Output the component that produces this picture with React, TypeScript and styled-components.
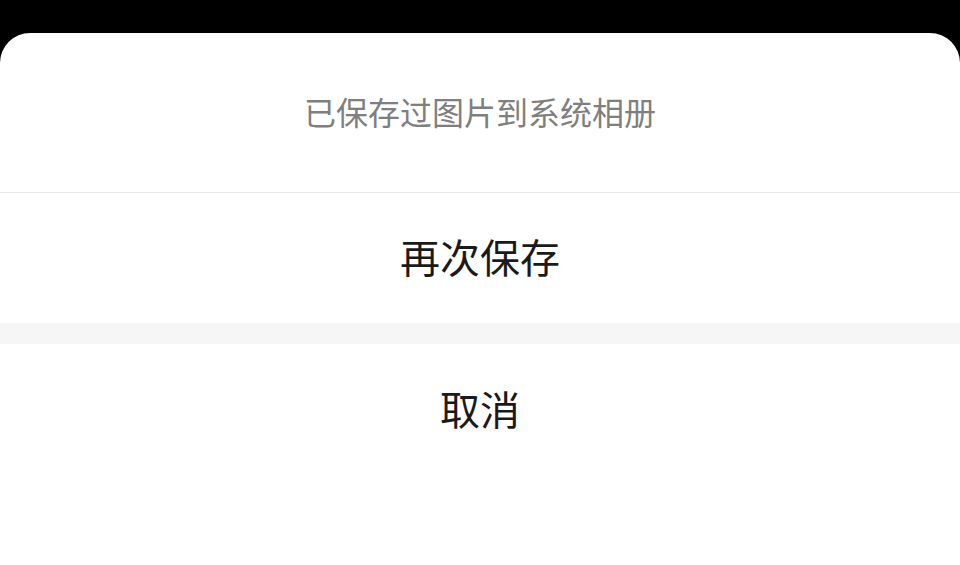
import React from 'react';
import styled, { createGlobalStyle } from 'styled-components';

const GlobalStyle = createGlobalStyle`
  html, body {
    margin: 0;
    padding: 0;
    background: #000;
    height: 100%;
  }
  #root {
    height: 100%;
  }
`;

const Screen = styled.div`
  height: 565px;
  display: flex;
  flex-direction: column;
  background: #000;
  padding-top: 33px;
  box-sizing: border-box;
  font-family: "Noto Sans CJK SC", "Noto Sans", sans-serif;
`;

const Sheet = styled.div`
  flex: 1;
  background: #fff;
  border-radius: 30px 30px 0 0;
  display: flex;
  flex-direction: column;
  overflow: hidden;
`;

const Title = styled.div`
  height: 160px;
  display: flex;
  align-items: center;
  justify-content: center;
  padding-bottom: 4px;
  box-sizing: border-box;
  font-size: 32px;
  color: #7f7f7f;
  border-bottom: 1px solid #e9e9e9;
`;

const Action = styled.div<{ $height: number }>`
  height: ${(p) => p.$height}px;
  display: flex;
  align-items: center;
  justify-content: center;
  padding-bottom: 5px;
  box-sizing: border-box;
  font-size: 40px;
  color: #1a1a1a;
`;

const Gap = styled.div`
  height: 21px;
  background: #f6f6f6;
`;

const App = () => {
  return (
    <>
      <GlobalStyle />
      <Screen>
        <Sheet>
          <Title>已保存过图片到系统相册</Title>
          <Action $height={130}>再次保存</Action>
          <Gap />
          <Action $height={132}>取消</Action>
        </Sheet>
      </Screen>
    </>
  );
};

export default App;
